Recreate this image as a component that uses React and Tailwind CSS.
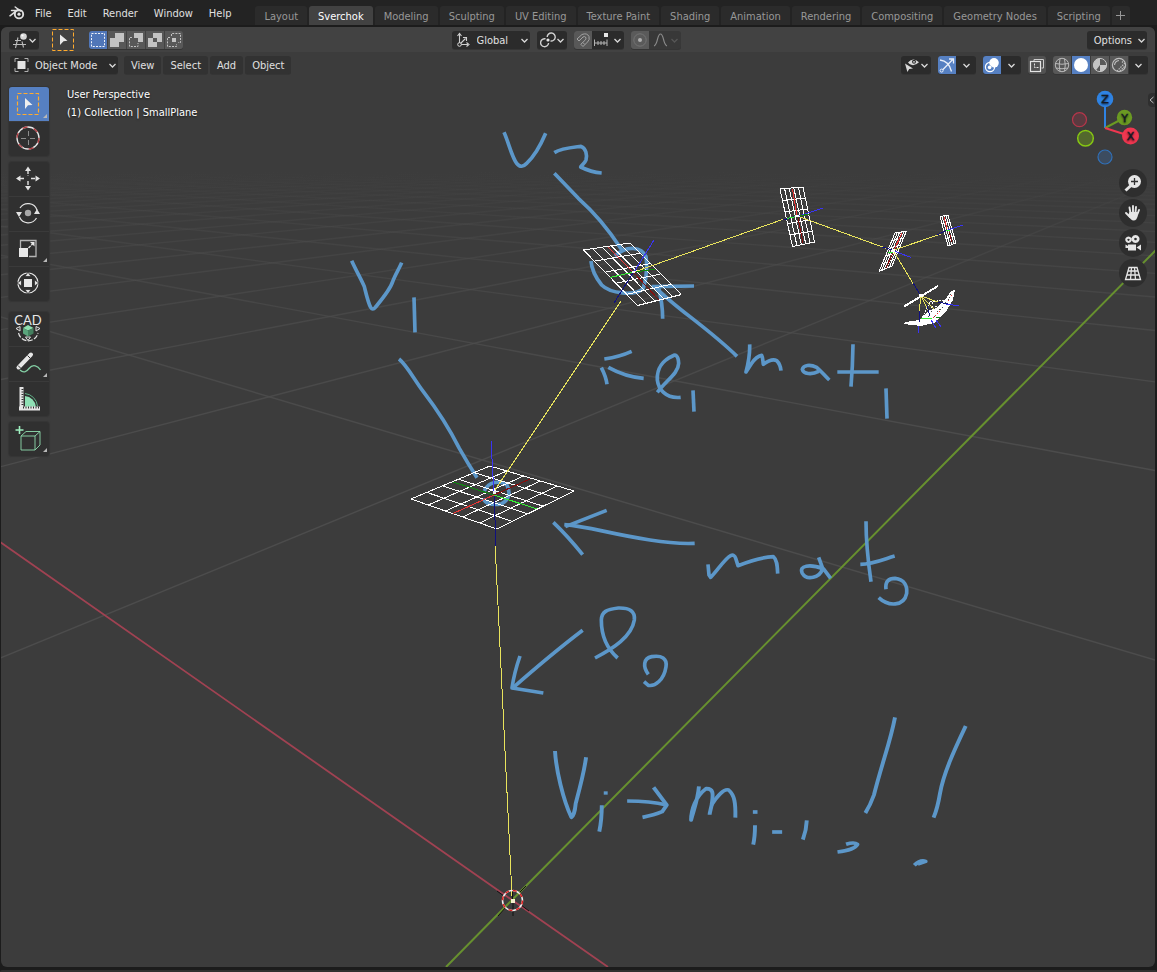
import React from "react";

/* ---------- small shared pieces ---------- */

function Svg({ w = 18, h = 18, className = "", children }) {
  return (
    <svg width={w} height={h} viewBox={`0 0 ${w} ${h}`} fill="none" stroke="#d8d8d8" className={`shrink-0 ${className}`} aria-hidden="true">
      {children}
    </svg>
  );
}

function Chevron({ color = "#d8d8d8" }) {
  return (
    <Svg w={9} h={18}>
      <path d="M1.5 8 L4.5 11 L7.5 8" stroke={color} strokeWidth="1.3" />
    </Svg>
  );
}

const shadow = "shadow-[0_1px_0_#353535]";

/* ---------- icons ---------- */

const Logo = () => (
  <Svg w={16} h={14} className="ml-[9px]">
    <path d="M1 9.8 L9.5 3.2 M2.5 4.6 H10.5 M6.2 1 L11.5 5" stroke="#e0e0e0" strokeWidth="1.5" strokeLinecap="round" />
    <circle cx="10" cy="8.2" r="4.2" stroke="#e0e0e0" strokeWidth="1.9" />
    <circle cx="10" cy="8.2" r="1.6" fill="#e0e0e0" stroke="none" />
  </Svg>
);

const EditorIcon = () => (
  <Svg w={16}>
    <path d="M3 9.5 H9 M1 13.5 H14 M6 6.5 L3.5 17 M10 10.5 L11.5 16.5" stroke="#bdbdbd" strokeWidth="1.1" />
    <circle cx="11.5" cy="5.5" r="3.3" fill="#d6d6d6" stroke="none" />
    <circle cx="10.5" cy="4.5" r="1.1" fill="#fff" stroke="none" />
  </Svg>
);

const SelectBoxIcon = ({ size = 22 }) => (
  <Svg w={size} h={size}>
    <rect x="0.5" y="0.5" width={size - 1} height={size - 1} stroke="#ffab2e" strokeWidth="1" strokeDasharray="4 2" />
    <path d="M8 5.5 L15.5 11.8 L11.5 12.2 L8 16 Z" fill="#eaeaea" stroke="none" />
  </Svg>
);

const modeIcons = [
  <Svg key="set"><rect x="2.5" y="2.5" width="13" height="13" stroke="#eef2fa" strokeDasharray="2 1.25" /></Svg>,
  <Svg key="ext"><path d="M7 2 H16 V11 H11 V16 H2 V7 H7 Z" fill="#c3c3c3" stroke="none" /></Svg>,
  <Svg key="sub">
    <path d="M7 2 H16 V11 H11 V7 H7 Z" fill="#c3c3c3" stroke="none" />
    <path d="M5 6.5 H2.5 V15.5 H11 V12" stroke="#c3c3c3" strokeDasharray="2 1.2" />
  </Svg>,
  <Svg key="inv"><path fillRule="evenodd" d="M7 2 H16 V11 H11 V16 H2 V7 H7 Z M7 7 V11 H11 V7 Z" fill="#c3c3c3" stroke="none" /></Svg>,
  <Svg key="int">
    <path d="M6.5 5 V2.5 H15.5 V11.5 H13 M5 6.5 H2.5 V15.5 H11.5 V13" stroke="#c3c3c3" strokeDasharray="2 1.2" />
    <rect x="7" y="7" width="4" height="4" fill="#c3c3c3" stroke="none" />
  </Svg>,
];

const OrientIcon = () => (
  <Svg w={16}>
    <path d="M4.5 4 V13.5 H13 M5 13 L10.5 7.5 M2.5 5 L4.5 2.5 L6.5 5 M11.5 11.5 L14 13.5 L11.5 15.5 M8 6.5 H11.5 V10" stroke="#cfcfcf" strokeWidth="1.1" />
    <circle cx="4.5" cy="13.5" r="1.8" fill="#2b2b2b" />
  </Svg>
);

const PivotIcon = () => (
  <Svg w={16}>
    <path d="M7.2 6 A4 4 0 1 1 10.5 10 M8.6 12 A4 4 0 1 1 5.5 7.8" stroke="#cfcfcf" strokeWidth="1.4" />
    <circle cx="8" cy="9" r="1.6" fill="#e6e6e6" stroke="none" />
  </Svg>
);

const MagnetIcon = () => (
  <Svg>
    <path d="M3 8 L8 3.5 Q13 1.5 15 5.5 Q16 9 13.5 11 L9 15.5 L6.8 13.3 L11.5 8.8 Q12.5 7 11.5 6 Q10.5 5 9 6 L5 10 Z M8.8 11.5 L10.8 13.5" stroke="#a3a3a3" strokeWidth="1" />
  </Svg>
);

const SnapIcon = () => (
  <Svg w={16}>
    <path d="M1.5 8.5 V15 M14 8.5 V15 M2 12 H14 M5 10 V14 M8 10 V14 M11 10 V14" stroke="#b5b5b5" />
    <rect x="11" y="2" width="4" height="4" fill="#e6e6e6" stroke="none" />
  </Svg>
);

const EyeIcon = () => (
  <Svg w={16}>
    <path d="M4 6.5 Q9 0.5 15 6.2 Q10 11 5.5 8 Z" fill="#d8d8d8" stroke="none" />
    <circle cx="10" cy="5.8" r="2" fill="#2b2b2b" stroke="none" />
    <circle cx="10" cy="5.8" r="0.9" fill="#d8d8d8" stroke="none" />
    <path d="M1 7.5 L9 12.5 L5.2 13 L3.4 16 Z" fill="#d8d8d8" stroke="none" />
  </Svg>
);

const GizmoIcon = () => (
  <Svg>
    <path d="M2 4 Q11 5 13.5 15.5 M3 15.5 L14.5 3.8 M11 3 H15.5 V7.5" stroke="#e8eefa" strokeWidth="1.3" />
    <circle cx="3.6" cy="14.6" r="1.5" fill="#5680c2" stroke="#e8eefa" />
  </Svg>
);

const OverlayIcon = () => (
  <Svg>
    <circle cx="11" cy="6.8" r="4.8" fill="#fff" stroke="none" />
    <circle cx="7" cy="11" r="4.6" stroke="#fff" strokeWidth="1.2" />
    <path d="M6.2 9 A4.8 4.8 0 0 0 9.5 11.6" stroke="#5680c2" strokeWidth="1.2" />
    <circle cx="6.6" cy="11.4" r="1.8" fill="#fff" stroke="none" />
  </Svg>
);

const XrayIcon = () => (
  <Svg>
    <path d="M6 5 V3.5 H15.5 V12 H13.5" stroke="#cdcdcd" />
    <rect x="2.5" y="5.5" width="10" height="10" stroke="#e4e4e4" strokeWidth="1.2" />
    <path d="M6.5 7.5 V11.5 H11" stroke="#e4e4e4" strokeDasharray="2 1" />
  </Svg>
);

const shadeIcons = [
  <Svg key="wire">
    <circle cx="9" cy="9" r="6.7" stroke="#b9b9b9" />
    <path d="M2.3 7.5 Q9 9 15.7 7.5 M2.8 12 Q9 13.5 15.2 12 M7 2.5 Q5.5 9 7 15.5 M11.5 2.8 Q13 9 11.5 15.2" stroke="#b9b9b9" />
  </Svg>,
  <Svg key="solid"><circle cx="9" cy="9" r="7" fill="#fff" stroke="none" /></Svg>,
  <Svg key="mat">
    <circle cx="9" cy="9" r="6.6" stroke="#c4c4c4" />
    <path d="M9 2.4 A6.6 6.6 0 0 0 5 14.2 L9 9 L9 2.4 M9 9 H15.6 A6.6 6.6 0 0 1 9 15.6 Z" fill="#c4c4c4" stroke="none" />
  </Svg>,
  <Svg key="render">
    <circle cx="9" cy="9" r="6.6" stroke="#bdbdbd" strokeWidth="1.2" />
    <path d="M4.5 9 Q5 5 9 4.5" stroke="#bdbdbd" strokeWidth="1.2" />
    <path d="M15 7 L7 15 M14.5 10.5 L10 15 M13 5.5 L12 6.5" stroke="#bdbdbd" strokeWidth="1.2" strokeDasharray="1.5 1" />
  </Svg>,
];

/* ---------- menus ---------- */

const menus = ["File", "Edit", "Render", "Window", "Help"];
const workspaces = ["Layout", "Sverchok", "Modeling", "Sculpting", "UV Editing", "Texture Paint", "Shading", "Animation", "Rendering", "Compositing", "Geometry Nodes", "Scripting"];

function TopBar() {
  return (
    <header className="flex h-[25px] items-center bg-[#232323] whitespace-nowrap">
      <Logo />
      <nav className="flex self-start pt-[5px] pl-[2px]">
        {menus.map((m) => (
          <button key={m} className="px-2 leading-[18px] text-[#e0e0e0]">{m}</button>
        ))}
      </nav>
      <div role="tablist" className="ml-4 flex gap-[2px] self-end">
        {workspaces.map((w) => (
          <button
            key={w}
            role="tab"
            aria-selected={w === "Sverchok"}
            className={`h-[19px] rounded-t-[3px] px-[9px] leading-[22px] ${w === "Sverchok" ? "bg-[#424242] text-white" : "bg-[#2b2b2b] text-[#989898]"}`}
          >
            {w}
          </button>
        ))}
        <button aria-label="Add workspace" className="flex h-[19px] w-[18px] items-center justify-center rounded-t-[3px] bg-[#2b2b2b]">
          <Svg w={9} h={9}><path d="M4.5 0 V9 M0 4.5 H9" stroke="#989898" /></Svg>
        </button>
      </div>
    </header>
  );
}

function IconMenu({ label, children, dim }) {
  return (
    <button aria-label={label} className={`flex h-[18px] w-[30px] items-center justify-between rounded-[3px] bg-[#2b2b2b] pr-[2px] pl-[3px] ${shadow}`}>
      {children}
      <Chevron color={dim ? "#5a5a5a" : undefined} />
    </button>
  );
}

function Picker({ label, value, icon, width }) {
  return (
    <label className={`flex h-[18px] items-center rounded-[3px] bg-[#2b2b2b] pr-[1px] pl-[3px] ${width} ${shadow}`}>
      {icon}
      <select aria-label={label} className="min-w-0 flex-1 appearance-none bg-transparent pt-[2px] pl-[6px] leading-[18px] text-[#e0e0e0] outline-none">
        <option>{value}</option>
      </select>
      <Chevron />
    </label>
  );
}

function ToolHeader() {
  return (
    <div className="flex h-[25px] items-center rounded-t-[6px] bg-[#424242] px-2">
      <div className="flex flex-1 items-center">
        <IconMenu label="Editor type"><EditorIcon /></IconMenu>
        <button aria-label="Select box" className="ml-[13px]"><SelectBoxIcon /></button>
        <div className={`ml-[15px] flex gap-px overflow-hidden rounded-[3px] ${shadow}`}>
          {modeIcons.map((icon, i) => (
            <button key={i} aria-label={`Selection mode ${i + 1}`} className={i === 0 ? "bg-[#5076b8]" : "bg-[#585858]"}>{icon}</button>
          ))}
        </div>
      </div>
      <div className="mr-6 flex gap-[7px]">
        <Picker label="Transform orientation" value="Global" icon={<OrientIcon />} width="w-[78px]" />
        <IconMenu label="Pivot point"><PivotIcon /></IconMenu>
        <div className={`flex overflow-hidden rounded-[3px] bg-[#2b2b2b] ${shadow}`}>
          <button aria-label="Snap" className="bg-[#585858]"><MagnetIcon /></button>
          <button aria-label="Snap to" className="flex w-8 items-center justify-between pr-[2px] pl-px"><SnapIcon /><Chevron /></button>
        </div>
        <div className={`flex overflow-hidden rounded-[3px] bg-[#383838] ${shadow}`}>
          <button aria-label="Proportional editing" className="bg-[#5a5a5a]">
            <Svg><circle cx="9" cy="9" r="6.2" stroke="#747474" /><circle cx="9" cy="9" r="2" fill="#b0b0b0" stroke="none" /></Svg>
          </button>
          <button aria-label="Falloff" className="flex w-8 items-center justify-between pr-[2px] pl-[3px]">
            <Svg w={16}><path d="M2 15 C6 14 5 3 8.5 3 C12 3 11 14 15 15" stroke="#8a8a8a" strokeWidth="1.2" /></Svg>
            <Chevron color="#565656" />
          </button>
        </div>
      </div>
      <div className="flex flex-1 justify-end">
        <button className={`flex h-[18px] items-center gap-[5px] rounded-[3px] bg-[#2b2b2b] pr-[1px] pl-[7px] text-[#e0e0e0] ${shadow}`}>
          <span className="pt-[2px] leading-[18px]">Options</span>
          <Chevron />
        </button>
      </div>
    </div>
  );
}

function SplitToggle({ label, children }) {
  return (
    <div className={`flex overflow-hidden rounded-[3px] bg-[#2b2b2b] ${shadow}`}>
      <button aria-label={label} aria-pressed="true" className="bg-[#5680c2]">{children}</button>
      <button aria-label={`${label} options`} className="flex w-5 justify-center"><Chevron /></button>
    </div>
  );
}

function ViewHeader() {
  return (
    <div className="relative flex h-[26px] items-center justify-between pr-[7px] pl-[9px]">
      <div className="flex items-center gap-[2px]">
        <Picker
          label="Mode"
          value="Object Mode"
          width="w-[108px] mr-1"
          icon={
            <Svg w={16}>
              <path d="M2 6 V2.5 H5.5 M11.5 2.5 H15 V6 M2 12 V15.5 H5.5 M11.5 15.5 H15 V12" stroke="#b0b0b0" />
              <rect x="4.5" y="5" width="8" height="8" fill="#e4e4e4" stroke="none" />
            </Svg>
          }
        />
        {["View", "Select", "Add", "Object"].map((m) => (
          <button key={m} className={`h-[18px] rounded-[3px] bg-[#323232] px-[7px] leading-[20px] text-[#e0e0e0] ${shadow}`}>{m}</button>
        ))}
      </div>
      <div className="flex gap-[7px]">
        <IconMenu label="Object visibility"><EyeIcon /></IconMenu>
        <SplitToggle label="Gizmos"><GizmoIcon /></SplitToggle>
        <SplitToggle label="Overlays"><OverlayIcon /></SplitToggle>
        <button aria-label="X-ray" className={`rounded-[3px] bg-[#525252] ${shadow}`}><XrayIcon /></button>
        <div className={`flex gap-px overflow-hidden rounded-[3px] bg-[#3a3a3a] ${shadow}`}>
          {shadeIcons.map((icon, i) => (
            <button key={i} aria-label={`Shading ${i + 1}`} className={i === 1 ? "bg-[#5680c2]" : "bg-[#585858]"}>{icon}</button>
          ))}
          <button aria-label="Shading options" className="flex w-[19px] justify-center bg-[#2b2b2b]"><Chevron /></button>
        </div>
      </div>
    </div>
  );
}

/* ---------- tool shelf ---------- */

function Tool({ label, active, more, children }) {
  return (
    <button aria-label={label} aria-pressed={!!active} className={`block h-[34px] w-10 ${active ? "bg-[#5680c2]" : "bg-[#303030]"}`}>
      <svg width="40" height="34" viewBox={active ? "0 0 40 34" : "0 1 40 34"} fill="none" stroke="#e2e2e2" aria-hidden="true">
        {children}
        {more && <path d="M38 27 V31 H34 Z" fill="#b8b8b8" stroke="none" />}
      </svg>
    </button>
  );
}

function ToolGroup({ children }) {
  return <div className="flex flex-col gap-px overflow-hidden rounded-[3px] bg-[#3a3a3a] shadow-[0_0_1px_1px_#353535]">{children}</div>;
}

function ToolShelf() {
  return (
    <div className="flex w-10 flex-col">
      <ToolGroup>
        <Tool label="Select Box" active more>
          <rect x="8.5" y="6.5" width="21" height="21" stroke="#ffab2e" strokeWidth="1.2" strokeDasharray="4 2" />
          <path d="M16 11 L23.5 18 L19 18.3 L16 22 Z" fill="#eee" stroke="none" />
        </Tool>
        <Tool label="Cursor">
          <circle cx="19" cy="17" r="11" strokeWidth="1.3" stroke="#e8e8e8" />
          <circle cx="19" cy="17" r="11" strokeWidth="1.3" stroke="#b03a3f" strokeDasharray="5 6.5" />
          <path d="M12 17.5 H17 M21 17.5 H26 M19.5 10 V15 M19.5 19 V24" stroke="#8c8c8c" />
        </Tool>
      </ToolGroup>
      <div className="mt-[6px]">
        <ToolGroup>
          <Tool label="Move">
            <path d="M19 9 V15 M19 20 V26 M11 17.5 H16 M22 17.5 H27" strokeWidth="1.4" strokeDasharray="4 1.5" />
            <path d="M16 10 L19 5.5 L22 10 Z M16 25 L19 29.5 L22 25 Z M11.5 14.5 L7 17.5 L11.5 20.5 Z M26.5 14.5 L31 17.5 L26.5 20.5 Z" fill="#e2e2e2" stroke="none" />
          </Tool>
          <Tool label="Rotate">
            <path d="M11 12 A9.5 9.5 0 0 1 28 14 M27.5 22 A9.5 9.5 0 0 1 10.5 21" strokeWidth="1.2" />
            <path d="M7 16 H13 L10 21 Z M25 18 L28 13 L31 18 Z" fill="#e2e2e2" stroke="none" />
            <circle cx="19" cy="17" r="3.2" fill="#a8a8a8" stroke="none" />
          </Tool>
          <Tool label="Scale" more>
            <path d="M11.5 17 V9.5 H27 V25.5 H20" stroke="#b4b4b4" strokeWidth="1.3" />
            <rect x="10" y="17" width="9" height="9" fill="#e8e8e8" stroke="none" />
            <path d="M19.5 17 L24 12.5" strokeWidth="1.4" strokeDasharray="3 1" />
            <path d="M21 11 H25.5 V15.5 Z" fill="#e8e8e8" stroke="none" />
          </Tool>
          <Tool label="Transform">
            <circle cx="19" cy="17" r="10" strokeWidth="1.2" />
            <rect x="15" y="13" width="8" height="8" fill="#e8e8e8" stroke="none" />
            <path d="M16 10.5 L19 6 L22 10.5 Z M16 23.5 L19 28 L22 23.5 Z M12.5 14 L8 17 L12.5 20 Z M25.5 14 L30 17 L25.5 20 Z" fill="#e2e2e2" stroke="#303030" strokeWidth="0.8" />
          </Tool>
        </ToolGroup>
      </div>
      <div className="mt-[11px]">
        <ToolGroup>
          <Tool label="CAD Transform">
            <path d="M9.5 22 A10 10 0 0 0 29 22" strokeWidth="1.2" strokeDasharray="5 1.5" />
            <path d="M7 17.5 L11 15.5 V20 Z M31 17.5 L27 15.5 V20 Z M16.5 26 H21.5 L19 29.5 Z" fill="#303030" strokeWidth="1" />
            <path d="M14 17 L19 14 L24.5 17 L19 19.5 Z" fill="#8fe0b0" stroke="none" />
            <path d="M14 17 L19 19.5 V25.5 L14 22.5 Z" fill="#5aa57c" stroke="none" />
            <path d="M24.5 17 L19 19.5 V25.5 L24.5 22.5 Z" fill="#44805f" stroke="none" />
            <text x="19" y="13.5" textAnchor="middle" fontFamily="Lato, 'DejaVu Sans', sans-serif" fontSize="13" fill="#e8e8e8" stroke="none">CAD</text>
          </Tool>
          <Tool label="Annotate" more>
            <path d="M9.5 21.5 L22 8.5" strokeWidth="4" stroke="#e6e6e6" strokeLinecap="round" />
            <path d="M18.5 9.5 L21.5 12.5 M9 19.5 L12 22.5" stroke="#303030" />
            <path d="M11 24 C15 28 18 25 20 22.5 C24 17.5 29 20 31.5 24" stroke="#83cfa4" strokeWidth="1.3" />
          </Tool>
          <Tool label="Measure">
            <path d="M16 15 A12 12 0 0 1 27 26 H16 Z" fill="#8fe0b5" stroke="none" />
            <path d="M16 12.5 A14 14 0 0 1 28.5 25" stroke="#5fae85" />
            <path d="M12.5 6 V28 M10 27.5 H31" stroke="#e4e4e4" strokeWidth="4" />
            <path d="M13.5 8 V25 M14 26.5 H30" stroke="#303030" strokeWidth="2" strokeDasharray="1 1.5" />
          </Tool>
        </ToolGroup>
      </div>
      <div className="mt-[6px]">
        <ToolGroup>
          <Tool label="Add Cube" more>
            <path d="M10.5 5 V13 M6.5 9 H14.5" stroke="#9ff0c0" strokeWidth="1.6" />
            <path d="M12 15 H26 V29 H12 Z M12 15 L17 10.5 H31 L26 15 M31 10.5 V24 L26 29" stroke="#8fdcae" strokeWidth="0.9" />
          </Tool>
        </ToolGroup>
      </div>
    </div>
  );
}

/* ---------- navigation gizmo ---------- */

function NavGizmo() {
  return (
    <svg width="76" height="76" viewBox="1066 89 76 76" fill="none" role="img" aria-label="View orientation">
      <path d="M1105 128 V99" stroke="#2f83e3" strokeWidth="2" />
      <path d="M1105 128 L1124 118" stroke="#6b9a23" strokeWidth="2" />
      <path d="M1105 128 L1130 136" stroke="#ef3750" strokeWidth="2" />
      <circle cx="1079.5" cy="119.7" r="7" fill="#5a3a40" stroke="#b5364a" strokeWidth="1.2" />
      <circle cx="1085.5" cy="138.3" r="7.8" fill="#53682d" stroke="#86c713" strokeWidth="1.5" />
      <circle cx="1105" cy="157" r="7" fill="#3c4c60" stroke="#3070b8" strokeWidth="1.2" />
      <circle cx="1105" cy="99" r="8.3" fill="#2f83e3" />
      <circle cx="1124.500" cy="117.5" r="7.7" fill="#6b9a23" />
      <circle cx="1130.5" cy="136" r="8.5" fill="#ef3750" />
      <g fontFamily="'DejaVu Sans', sans-serif" fontSize="11" fill="#161c28" stroke="#161c28" strokeWidth="0.4" textAnchor="middle">
        <text x="1105" y="103">Z</text>
        <text x="1124.5" y="121.5">Y</text>
        <text x="1130.5" y="140">X</text>
      </g>
    </svg>
  );
}

function RoundButton({ label, children }) {
  return (
    <button aria-label={label} className="flex size-7 items-center justify-center rounded-full bg-[#2e2e2e]">
      <Svg>{children}</Svg>
    </button>
  );
}

function NavColumn() {
  return (
    <div className="flex flex-col items-end">
      <NavGizmo />
      <div className="mt-1 mr-[-5px] flex flex-col gap-[2px]">
        <RoundButton label="Zoom">
          <path d="M1.5 16.5 L7 11.5" strokeWidth="3" stroke="#e6e6e6" />
          <circle cx="10.5" cy="7.5" r="6.5" fill="#e6e6e6" stroke="none" />
          <path d="M10.5 4 V11 M7 7.5 H14" stroke="#303030" strokeWidth="1.3" />
        </RoundButton>
        <RoundButton label="Pan">
          <path d="M6.5 9 L5.5 3.5 M9 8 V2 M11.5 8 L12 3 M13.5 10 L15 6 M6 13 L2 9" stroke="#e6e6e6" strokeWidth="1.9" strokeLinecap="round" />
          <path d="M5.5 8 H13.5 L14 11 Q13 16.5 9.5 16.5 Q7 16.5 4 11.5 Z" fill="#e6e6e6" stroke="none" />
        </RoundButton>
        <RoundButton label="Camera view">
          <path fillRule="evenodd" d="M4.5 2.5 A3.2 3.2 0 1 1 4.499 2.5 Z M4.5 4.7 A1 1 0 1 0 4.501 4.7 Z M11.5 1 A4 4 0 1 1 11.499 1 Z M11.5 3.7 A1.3 1.3 0 1 0 11.501 3.7 Z" fill="#e6e6e6" stroke="none" />
          <path d="M4 10.5 H12 V16.5 H4 Z M12.5 13.5 L17 10.5 V16.5 Z M1.5 10.5 L4 12 V14 H1.5 Z" fill="#e6e6e6" stroke="none" />
        </RoundButton>
        <RoundButton label="Toggle perspective">
          <path d="M5 3.5 H13 L16.5 15.5 H1.5 Z M4 7 H14 M3 11 H15 M7.5 3.5 L6.5 15.5 M10.5 3.5 L11.5 15.5" stroke="#e6e6e6" strokeWidth="1.3" />
        </RoundButton>
      </div>
    </div>
  );
}

/* ---------- 3D scene ---------- */

/* perspective projection of floor coordinates (u along -X, v along +Y, one unit per grid cell) */
function project(u, v) {
  const w = 1 + 0.6142 * u + 0.7738 * v;
  return [(512 - 342.5 * u + 981.5 * v) / w, (900 + 92.7 * u + 105.7 * v) / w];
}

function Floor() {
  const lines = [];
  for (let k = 1; k <= 32; k++) {
    const a = project(k, -(0.7 + 0.6142 * k) / 0.7738);
    const b = project(k, 34);
    const c = project(-(0.7 + 0.7738 * k) / 0.6142, k);
    const d = project(34, k);
    lines.push(<path key={`u${k}`} d={`M${a} L${b}`} />, <path key={`v${k}`} d={`M${c} L${d}`} />);
  }
  return (
    <g>
      <linearGradient id="fade" gradientUnits="userSpaceOnUse" x1="0" y1="172" x2="0" y2="460">
        <stop offset="0" stopColor="#4c4c4c" stopOpacity="0" />
        <stop offset="0.2" stopColor="#4c4c4c" stopOpacity="0.4" />
        <stop offset="0.6" stopColor="#4c4c4c" stopOpacity="0.8" />
        <stop offset="1" stopColor="#4c4c4c" />
      </linearGradient>
      <g stroke="url(#fade)" strokeWidth="1.4">{lines}</g>
      <path d="M0 542 L512 900 L608 967" stroke="#a04252" strokeWidth="1.8" />
      <path d="M446 967 L512 900 L1156 250" stroke="#67902f" strokeWidth="2" />
    </g>
  );
}

function Plane({ q, n = 5, width = 1 }) {
  const [a, b, c, d] = q;
  const mix = (p, r, t) => [p[0] + (r[0] - p[0]) * t, p[1] + (r[1] - p[1]) * t];
  const out = [];
  for (let i = 0; i <= n; i++) {
    const t = i / n;
    out.push(`M${mix(a, b, t)} L${mix(d, c, t)}`, `M${mix(a, d, t)} L${mix(b, c, t)}`);
  }
  return <path d={out.join(" ")} stroke="#fff" strokeWidth={width} />;
}

function Ink({ x = 0, y = 0, kx = 3, ky = 3, strokes }) {
  return (
    <g transform={`translate(${x} ${y}) scale(${1 / kx} ${1 / ky})`} strokeWidth="11">
      {strokes.map((d) => <path key={d} d={d} />)}
    </g>
  );
}

function Notes() {
  return (
    <g stroke="#5c97c9" strokeLinejoin="round">
      <Ink x={340} y={120} strokes={[
        "M492 37 C505 65 515 110 530 130 C540 143 550 140 560 130 C580 112 600 80 617 40",
        "M643 98 C665 84 700 82 723 79 C738 85 742 105 738 120 C735 130 722 138 722 141 C740 150 760 157 785 159",
        "M643 160 L715 235 C760 275 800 320 840 382 L850 395",
        "M35 422 C50 455 65 480 73 500 C78 520 85 550 92 562 Q98 572 106 562 C120 545 150 510 158 485 C165 465 178 445 185 428",
        "M222 532 L225 637",
        "M177 717 C200 735 220 775 250 815 C300 880 330 930 358 985 C375 1015 390 1040 411 1073",
      ]} />
      <Ink x={560} y={120} strokes={[
        "M165 408 C200 375 245 380 258 410 C262 440 258 480 250 505 C225 530 150 520 125 495 C105 470 95 450 93 423",
        "M275 500 L402 498",
        "M295 500 Q308 550 308 596",
        "M285 500 C340 560 440 620 531 709",
      ]} />
      <Ink x={390} y={430} strokes={["M283 183 C295 155 330 150 350 164 C362 185 360 208 335 221 C305 228 285 220 280 206"]} />
      <Ink x={540} y={330} strokes={[
        "M193 87 Q240 80 275 64", "M184 113 Q198 140 201 163", "M205 112 Q255 140 311 145",
        "M352 187 C380 150 415 130 416 100 C415 75 405 73 398 78 C370 90 350 115 352 150 C355 175 375 207 422 202",
        "M459 181 L462 245",
        "M629 43 C630 70 625 100 618 126 L635 100 C645 85 655 78 665 76 C670 85 668 95 670 103 C685 92 700 87 710 92 C720 102 722 112 723 122",
        "M836 124 C815 135 790 132 787 118 C790 105 810 102 830 112 C845 125 855 138 868 150",
        "M939 43 Q938 110 933 170", "M892 126 H1016", "M1038 175 L1041 266",
        "M73 584 C150 590 200 610 330 630 C380 638 420 642 464 640", "M76 590 L200 541", "M40 577 Q85 620 128 674",
        "M504 703 L507 735 L512 742 C530 725 555 685 572 677 Q583 672 587 685 L594 707 C625 695 660 682 700 680 C712 690 712 710 713 731",
        "M836 682 L848 715 C840 745 800 752 787 730 C775 706 810 702 850 716 L872 745",
        "M978 574 C978 640 985 700 993 755", "M961 703 C1000 702 1030 688 1064 678",
        "M1038 778 C1035 755 1045 745 1065 745 C1095 748 1102 770 1100 790 C1092 830 1045 830 1016 803",
        "M165 984 C220 955 275 920 283 870 C286 845 270 833 235 834 C200 838 185 845 184 870 C184 920 200 955 233 984",
        "M325 1033 C308 1010 310 985 335 980 C365 975 382 985 378 1010 C372 1050 345 1070 325 1066 L312 1055",
        "M128 901 C70 945 -20 1020 -84 1076", "M-60 978 Q-78 1030 -84 1074 L10 1089",
      ]} />
      <Ink x={440} y={700} kx={2.8} strokes={[
        "M322 153 C325 210 345 300 368 352 C372 350 378 335 380 310 C390 270 403 220 409 172",
        "M464 274 V284", "M453 316 Q453 360 446 395",
        "M524 303 C560 303 600 306 635 315", "M598 262 L635 315 L622 335 Q600 345 567 352",
        "M725 259 C722 300 710 330 703 360 C703 330 715 290 745 266 C765 265 765 280 762 305 C760 325 755 335 755 344",
        "M760 315 C775 290 795 265 808 270 C825 285 828 310 827 353",
        "M876 336 H889", "M882 376 Q882 410 877 434", "M930 396 H958", "M1027 361 Q1026 390 1016 419",
        "M1137 433 Q1160 425 1169 433 Q1160 450 1113 456",
        "M1274 52 C1260 130 1240 180 1215 285 Q1205 315 1191 339",
        "M1472 78 C1440 150 1410 220 1400 280 Q1393 325 1382 353",
        "M1328 496 Q1345 478 1360 484 L1338 492",
      ]} />
    </g>
  );
}

function Scene() {
  return (
    <svg className="absolute inset-0 size-full" viewBox="1 52 1154 915" preserveAspectRatio="xMidYMid slice" fill="none" role="img" aria-label="3D viewport with annotated planes">
      <Floor />
      <Notes />
      <g shapeRendering="crispEdges">
        <Plane q={[[411, 499], [490, 466], [574, 491], [497, 529]]} />
        <Plane q={[[583.5, 250], [630, 243], [681.5, 294.5], [637.5, 305.5]]} />
        <Plane q={[[780, 189], [803, 187], [814.5, 242], [792.5, 246.5]]} />
        <Plane q={[[895, 233], [906.5, 231], [892, 266], [879, 271.5]]} />
        <Plane q={[[940, 216.5], [948, 215], [956, 243], [948, 246]]} n={4} />
        <path d="M904 306.5 L938 286" stroke="#fff" strokeWidth="2" />
        <path d="M955 290 L953 300 L947 310 L940 318 L934 323 L921 326 L904 324 L905 322 L919 320 L928 311 L936 308 L945 300 L951 291 Z" fill="#fff" />
        <path d="M930 302 L944 300 L936 314 L923 316 Z" stroke="#fff" strokeDasharray="2 1" />
        <path d="M931 306 H942 M928 310 H940 M933 302 L928 316" stroke="#fff" strokeDasharray="2 2" />
        <path d="M932 311 L926 320 M940 309 L934 317 M946 302 L940 311 M951 294 L948 300" stroke="#4a4a4a" strokeDasharray="1 2" />
        <path d="M512 896 L495 543 M495 490 L621 301 M634 272 L784 219 M800 217 L888 249 M894 250 L941 234 M894 252 L914 285 M921 296 L919 312 M921 296 L938 302 M921 296 L929 312 M921 296 L934 309" stroke="#e8e35c" />
        <path d="M491 441 L494 494 M634 272 L654 240 M799 216 L823 208 M894 251 L911 257.5 M948 230 L963 225 M946 304 L959 306 M918.5 326 V333 M931 320 L936 328 M936 320 L941 327" stroke="#3a34f5" />
        <path d="M494 494 L496 546 M633 273 L614 303 M797 216 L783 220 M893 250 L882 247 M947 230 L937 235 M913 283 L921 296 M919 311 V322 M938 302 L948 304 M927 306 L930 316" stroke="#101080" />
        <path d="M453 513.5 L494 495 M608 247 L633 272 M792.5 189 L797 216 M902 233 L894 250 M944 217 L947 229" stroke="#f03636" />
        <path d="M940 311 L933 318 M952 295 L947 303" stroke="#f03636" strokeDasharray="1 2" />
        <path d="M494 495 L530 479 M634 273 L659 300 M798 218 L803 243 M893 253 L886 268 M949 232 L952 242" stroke="#8a0c0c" />
        <path d="M494 495 L537 509 M610 277.5 L634 272 M787 218.5 L799 216 M888 252.5 H893 M921 318.5 H932 M946 230 H950" stroke="#35f035" />
        <path d="M453 482 L494 495 M636 272 L655 269 M800 216 L809 214 M936 317 H940" stroke="#0d8a0d" />
        <rect x="493" y="491" width="3" height="3" fill="#f0f0f0" />
        <rect x="632" y="271" width="3" height="2" fill="#fff" />
        <rect x="795" y="215" width="4" height="2" fill="#fff" />
        <rect x="892" y="249" width="3" height="3" fill="#fff" />
        <rect x="919" y="294" width="4" height="3" fill="#fff" />
      </g>
      <path d="M497 891 L504 896 M521 905 L529 911 M526 886 L519 893 M506 907 L498 916 M512.5 889 V900 M513 903 V916" stroke="#111" />
      <circle cx="512.5" cy="900.5" r="10" stroke="#f0f0f0" strokeWidth="1.5" />
      <circle cx="512.5" cy="900.5" r="10" stroke="#e02020" strokeWidth="1.5" strokeDasharray="4 3.854" />
      <rect x="511" y="899" width="4" height="4" fill="#f4f0d0" />
    </svg>
  );
}

/* ---------- page ---------- */

export default function App() {
  return (
    <div className="flex min-h-screen flex-col bg-[#1c1c1c] font-['DejaVu_Sans_Condensed','DejaVu_Sans',sans-serif] text-[11px] [text-shadow:0_1px_2px_rgba(0,0,0,0.6)]">
      <TopBar />
      <main className="mt-[2px] mr-[2px] ml-px flex flex-1 flex-col overflow-hidden rounded-[6px] bg-[#3c3c3c]">
        <ToolHeader />
        <section className="relative flex flex-1 flex-col" aria-label="Viewport">
          <Scene />
          <ViewHeader />
          <div className="relative flex flex-1 items-start pt-[9px] pl-2">
            <ToolShelf />
            <div className="mt-[-1px] ml-[18px] flex-1 leading-[18px] text-white">
              <p>User Perspective</p>
              <p>(1) Collection | SmallPlane</p>
            </div>
            <div className="mt-[2px] mr-[13px]"><NavColumn /></div>
            <button aria-label="Show sidebar" className="absolute top-[15px] right-0 flex h-[14px] w-[7px] items-center justify-center rounded-l-[4px] bg-[#2f2f2f]">
              <Svg w={5} h={8}><path d="M4.5 1 L1 4 L4.5 7" stroke="#c0c0c0" /></Svg>
            </button>
          </div>
        </section>
      </main>
      <div className="mt-[3px] h-[2px] rounded-t-[6px] bg-[#303030]" />
    </div>
  );
}
